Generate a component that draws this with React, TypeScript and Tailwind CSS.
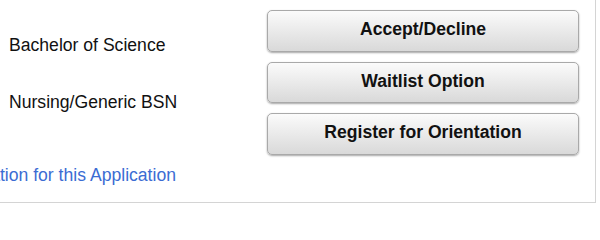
const buttons = ["Accept/Decline", "Waitlist Option", "Register for Orientation"]

export default function App() {
  return (
    <div className="w-[600px] h-[240px] overflow-hidden bg-white font-['Liberation_Sans',Arial,sans-serif] text-[17.6px] leading-[22px] text-[#111]">
      <div className="flex w-[596px] h-[203px] border-r border-b border-[#d4d4d4]">
        {/* program details */}
        <div className="flex flex-col w-[267px] pt-[34px]">
          <div className="pl-[9px] whitespace-nowrap">Bachelor of Science</div>
          <div className="pl-[9px] mt-[35px] whitespace-nowrap">Nursing/Generic BSN</div>
          <div className="flex justify-end w-[176px] mt-[51px]">
            <a href="#" className="shrink-0 whitespace-nowrap text-[#3b6cd3]">
              Additional Information for this Application
            </a>
          </div>
        </div>

        {/* actions */}
        <div className="flex flex-col gap-[10px] w-[312px] pt-[10px]">
          {buttons.map((label) => (
            <button
              key={label}
              className="h-[41.5px] w-full pb-[3px] rounded-[5px] border border-[#a9a9a9] bg-gradient-to-b from-[#fbfbfb] to-[#d9d9d9] font-bold text-[#111] shadow-[0_1px_2px_rgba(0,0,0,0.35)]"
            >
              {label}
            </button>
          ))}
        </div>
      </div>
    </div>
  )
}
